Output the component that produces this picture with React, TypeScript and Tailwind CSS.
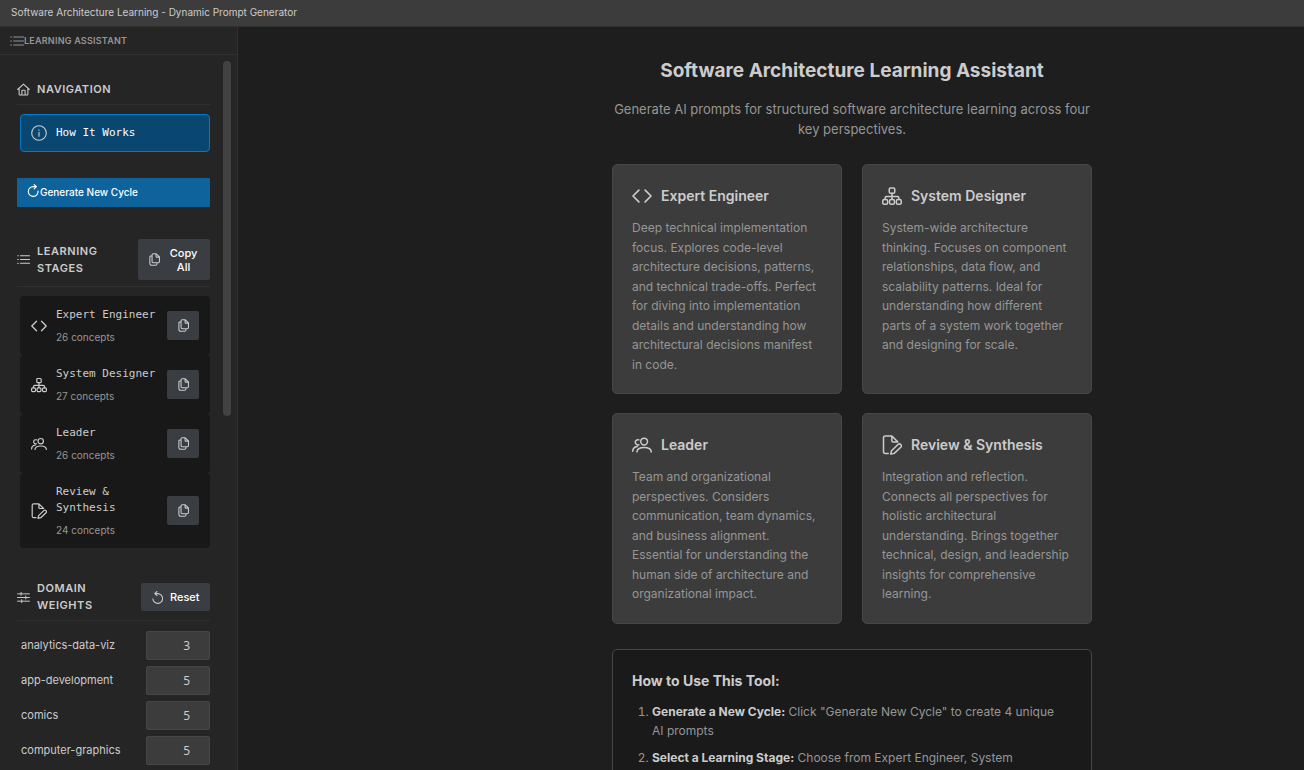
import React from "react";

type IconProps = { className?: string };

function Svg({ className = "", width = 1, children }: IconProps & { width?: number; children: React.ReactNode }) {
  return (
    <svg
      viewBox="0 0 16 16"
      fill="none"
      stroke="currentColor"
      strokeWidth={width}
      strokeLinecap="round"
      strokeLinejoin="round"
      aria-hidden="true"
      className={`shrink-0 ${className}`}
    >
      {children}
    </svg>
  );
}

const ListIcon = ({ className }: IconProps) => (
  <Svg className={className} width={1.3}>
    <path d="M4.2 3.4h11.2M4.2 8h11.2M4.2 12.6h11.2M.8 3.4h.8M.8 8h.8M.8 12.6h.8" />
  </Svg>
);

const HomeIcon = ({ className }: IconProps) => (
  <Svg className={className} width={1.3}>
    <path d="M.8 8 8 1.4 15.2 8M2.6 6.6v7.2q0 .9.9.9h9q.9 0 .9-.9V6.6M6 14.5V9.8q0-.9.9-.9h2.200q.9 0 .9.9v4.7" />
  </Svg>
);

const InfoIcon = ({ className }: IconProps) => (
  <Svg className={className} width={1.1}>
    <circle cx="8" cy="8" r="7.3" />
    <path d="M8 7.3v4M8 4.9v.3" />
  </Svg>
);

const RefreshIcon = ({ className }: IconProps) => (
  <Svg className={className} width={1.4}>
    <path d="M13.6 8.8A6 6 0 1 1 7.600 3.300h4M8.800.7l2.800 2.600L8.800 6" />
  </Svg>
);

const ResetIcon = ({ className }: IconProps) => (
  <Svg className={className} width={1.3}>
    <path d="M2.3 9.500A6 6 0 1 0 8.300 3.200H4.600M7.400.6 4.600 3.200l2.800 2.600" />
  </Svg>
);

const CopyIcon = ({ className }: IconProps) => (
  <Svg className={className} width={1.3}>
    <path d="M6.4 1h3.8l3.9 3.9v5.7q0 1.4-1.4 1.4H6.4Q5 12 5 10.600V2.400Q5 1 6.400 1ZM9.900 1.200v2.700q0 1.200 1.200 1.200h2.800M5 3.600H3.700Q2.300 3.600 2.300 5v7.500q0 2.500 2.500 2.500h4.900q1.400 0 1.500-2.800" />
  </Svg>
);

const CodeIcon = ({ className }: IconProps) => (
  <Svg className={className} width={1.3}>
    <path d="M5.500 3.300.800 8l4.700 4.700M10.500 3.300 15.200 8l-4.700 4.700" />
  </Svg>
);

const HierarchyIcon = ({ className }: IconProps) => (
  <Svg className={className} width={1.2}>
    <rect x="5.800" y="1.500" width="4.400" height="4.200" rx="1" />
    <rect x=".6" y="10.800" width="3.900" height="3.800" rx="1.200" />
    <rect x="6.050" y="10.800" width="3.900" height="3.800" rx="1.200" />
    <rect x="11.500" y="10.800" width="3.900" height="3.800" rx="1.200" />
    <path d="M8 5.700v5M2.500 10.700V9.600q0-1.300 1.300-1.300h8.400q1.300 0 1.300 1.300v1.100" />
  </Svg>
);

const PeopleIcon = ({ className }: IconProps) => (
  <Svg className={className} width={1.2}>
    <circle cx="9.700" cy="5.200" r="2.700" />
    <path d="M4 13.500q.2-3.500 5.700-3.500t5.700 3.500M5.500 3.900A2.100 2.100 0 1 0 5.500 7.800M.6 13q0-3.300 3.600-3.800" />
  </Svg>
);

const FileEditIcon = ({ className }: IconProps) => (
  <Svg className={className} width={1.2}>
    <path d="M5 14.700H2.700Q1.200 14.700 1.200 13.200V2.300Q1.200.800 2.700.800h5.200l4.700 4.700M7.900.900v3.600q0 1 1 1h3.700M7 15.300l.6-2.700 5.200-5q1.200-1 2.200 0t0 2.200l-5.200 4.900Z" />
  </Svg>
);

const SlidersIcon = ({ className }: IconProps) => (
  <Svg className={className} width={1.2}>
    <path d="M.7 3.500h14.600M.7 8h14.600M.7 12.500h14.600M5 1.700v3.600M10.800 6.200v3.600M5.800 10.700v3.600" />
  </Svg>
);

const stages = [
  {
    name: "Expert Engineer",
    count: 26,
    Icon: CodeIcon,
    text: "Deep technical implementation focus. Explores code-level architecture decisions, patterns, and technical trade-offs. Perfect for diving into implementation details and understanding how architectural decisions manifest in code.",
  },
  {
    name: "System Designer",
    count: 27,
    Icon: HierarchyIcon,
    text: "System-wide architecture thinking. Focuses on component relationships, data flow, and scalability patterns. Ideal for understanding how different parts of a system work together and designing for scale.",
  },
  {
    name: "Leader",
    count: 26,
    Icon: PeopleIcon,
    text: "Team and organizational perspectives. Considers communication, team dynamics, and business alignment. Essential for understanding the human side of architecture and organizational impact.",
  },
  {
    name: "Review & Synthesis",
    count: 24,
    Icon: FileEditIcon,
    text: "Integration and reflection. Connects all perspectives for holistic architectural understanding. Brings together technical, design, and leadership insights for comprehensive learning.",
  },
];

const domains = [
  { name: "analytics-data-viz", weight: 3 },
  { name: "app-development", weight: 5 },
  { name: "comics", weight: 5 },
  { name: "computer-graphics", weight: 5 },
];

function SectionHeading({
  icon,
  title,
  children,
}: {
  icon: React.ReactNode;
  title: string;
  children?: React.ReactNode;
}) {
  return (
    <div className="flex items-center justify-between border-b border-[#303030] pb-1.5">
      <h2 className="flex items-center gap-[7px] text-[11px] leading-[17px] font-semibold tracking-wider text-[#cccccc] uppercase">
        {icon}
        <span className={children ? "w-20" : ""}>{title}</span>
      </h2>
      {children}
    </div>
  );
}

function Sidebar() {
  return (
    <aside className="flex w-[238px] shrink-0 flex-col border-r border-[#303030] bg-[#252526]">
      <div className="flex h-7 shrink-0 items-center border-b border-[#303030] pl-2.5 text-[9px] font-semibold tracking-wide text-[#969696] uppercase">
        <ListIcon className="size-3.5" />
        Learning Assistant
      </div>
      <div className="flex min-h-0 flex-1">
        <div className="min-w-0 flex-1 overflow-y-auto pt-[26px] pr-[13px] pl-[17px] [scrollbar-width:none]">
          <section>
            <SectionHeading icon={<HomeIcon className="size-[13px]" />} title="Navigation" />
            <button className="mt-[9px] ml-[3px] flex h-[38px] w-[190px] items-center gap-[9px] rounded border border-[#007acc] bg-[#094771] pl-2.5 font-['DejaVu_Sans_Mono',monospace] text-[11px] text-white">
              <InfoIcon className="size-4 text-[#cccccc]" />
              How It Works
            </button>
            <button className="mt-[26px] flex h-[29px] w-full items-center rounded-[1px] bg-[#0e639c] pl-2.5 text-[10px] font-medium text-white">
              <RefreshIcon className="mb-1 size-[13px]" />
              Generate New Cycle
            </button>
          </section>

          <section className="mt-8">
            <SectionHeading icon={<ListIcon className="size-[13px]" />} title="Learning Stages">
              <button className="flex h-[41px] w-[72px] shrink-0 items-center gap-1.5 rounded-xs bg-[#3a3d41] px-2.5 text-[11px] leading-[14px] font-medium text-white">
                <CopyIcon className="size-[13px] text-[#cccccc]" />
                <span className="flex-1">Copy All</span>
              </button>
            </SectionHeading>
            <ul className="mt-[9px] ml-[3px]">
              {stages.map(({ name, count, Icon }) => (
                <li key={name} className="flex items-center gap-[9px] rounded bg-[#181818] px-[11px] py-[11px]">
                  <Icon className="size-4 text-[#cccccc]" />
                  <div className="min-w-0 flex-1">
                    <div className="font-['DejaVu_Sans_Mono',monospace] text-[11px] leading-4 text-[#cccccc]">
                      <span className={name.includes("&") ? "" : "whitespace-nowrap"}>{name}</span>
                    </div>
                    <div className="mt-[7px] text-[10px] leading-[14px] text-[#969696]">{count} concepts</div>
                  </div>
                  <button
                    aria-label={`Copy ${name}`}
                    className="flex h-[29px] w-8 shrink-0 items-center justify-center rounded-xs bg-[#3a3d41] text-[#cccccc]"
                  >
                    <CopyIcon className="size-[13px]" />
                  </button>
                </li>
              ))}
            </ul>
          </section>

          <section className="mt-8">
            <SectionHeading icon={<SlidersIcon className="size-[13px]" />} title="Domain Weights">
              <button className="flex h-7 w-[69px] shrink-0 items-center gap-1.5 rounded-xs bg-[#3a3d41] pl-2.5 text-[11px] font-medium text-white">
                <ResetIcon className="size-[13px] text-[#cccccc]" />
                Reset
              </button>
            </SectionHeading>
            <div className="mt-2.5 flex flex-col gap-1.5 pb-4">
              {domains.map(({ name, weight }) => (
                <div key={name} className="flex items-center justify-between pl-1">
                  <label htmlFor={name} className="text-[11px] text-[#cccccc]">
                    {name}
                  </label>
                  <input
                    id={name}
                    type="text"
                    inputMode="numeric"
                    defaultValue={weight}
                    className="h-[29px] w-16 rounded-xs border border-[#474747] bg-[#3c3c3c] pr-[19px] text-right font-['Noto_Sans',sans-serif] text-[12px] text-[#cccccc]"
                  />
                </div>
              ))}
            </div>
          </section>
        </div>
        <div className="w-3.5 shrink-0 pt-1.5">
          <div className="h-1/2 w-2 rounded-full bg-[#424242]" />
        </div>
      </div>
    </aside>
  );
}

function Guide() {
  return (
    <main className="min-w-0 flex-1 overflow-y-auto pl-[162px] [scrollbar-width:none]">
      <div className="mx-auto max-w-[480px] pt-8 pb-8">
        <h1 className="text-center text-[19px] leading-6 font-bold text-[#cccccc]">
          Software Architecture Learning Assistant
        </h1>
        <p className="mt-4 text-center text-[13px] leading-5 text-[#969696]">
          Generate AI prompts for structured software architecture learning across four key perspectives.
        </p>
        <div className="mt-[25px] grid grid-cols-2 gap-x-5 gap-y-[19px]">
          {stages.map(({ name, Icon, text }) => (
            <article key={name} className="rounded-[5px] border border-[#474747] bg-[#3c3c3c] p-[19px]">
              <h2 className="flex items-center gap-[9px] text-[14px] leading-6 font-semibold text-[#cccccc]">
                <Icon className="size-5" />
                {name}
              </h2>
              <p className="mt-2.5 text-[12px] leading-relaxed text-[#969696]">{text}</p>
            </article>
          ))}
        </div>
        <section className="mt-[25px] rounded-[5px] border border-[#474747] bg-[#1a1a1a] p-[19px]">
          <h2 className="text-[14px] leading-6 font-bold text-[#cccccc]">How to Use This Tool:</h2>
          <ol className="mt-[9px] flex list-decimal flex-col gap-2 pr-3 pl-5 text-[12px] leading-[19px] text-[#969696]">
            <li>
              <strong className="font-bold text-[#cccccc]">Generate a New Cycle:</strong> Click "Generate New Cycle" to
              create 4 unique AI prompts
            </li>
            <li>
              <strong className="font-bold text-[#cccccc]">Select a Learning Stage:</strong> Choose from Expert
              Engineer, System Designer, Leader, or Review &amp; Synthesis
            </li>
          </ol>
        </section>
      </div>
    </main>
  );
}

export default function App() {
  return (
    <div className="flex h-screen flex-col overflow-hidden bg-[#1e1e1e] font-['Inter',sans-serif]">
      <header className="flex h-[27px] shrink-0 items-center border-b border-[#303030] bg-[#3c3c3c] pb-0.5 pl-[11px] text-[10px] text-[#cccccc]">
        Software Architecture Learning - Dynamic Prompt Generator
      </header>
      <div className="flex min-h-0 flex-1">
        <Sidebar />
        <Guide />
      </div>
    </div>
  );
}
